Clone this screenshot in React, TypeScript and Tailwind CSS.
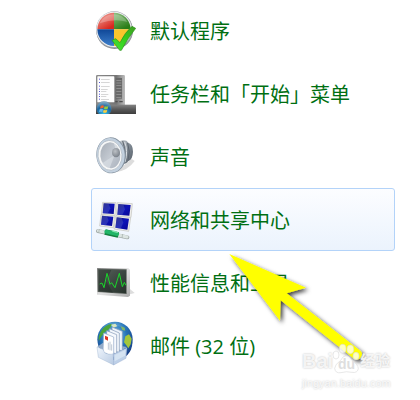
import React from 'react';

const ICON_CLASS = 'w-[40px] h-[41px] shrink-0';

function DefaultProgramsIcon() {
  return (
    <svg viewBox="33 30 120 123" className={ICON_CLASS} aria-hidden="true">
      <defs>
        <linearGradient id="dp-red" x1="0" y1="0" x2="0.6" y2="1">
          <stop offset="0" stopColor="#f3b0a6" />
          <stop offset="1" stopColor="#d8281f" />
        </linearGradient>
        <linearGradient id="dp-green" x1="0" y1="0" x2="0.5" y2="1">
          <stop offset="0" stopColor="#8fc183" />
          <stop offset="1" stopColor="#2a7d17" />
        </linearGradient>
        <linearGradient id="dp-blue" x1="0" y1="0" x2="0" y2="1">
          <stop offset="0" stopColor="#0f4797" />
          <stop offset="1" stopColor="#3d7fcb" />
        </linearGradient>
        <linearGradient id="dp-check" x1="1" y1="0" x2="0" y2="1">
          <stop offset="0" stopColor="#3f9a22" />
          <stop offset="0.5" stopColor="#35cf1c" />
          <stop offset="1" stopColor="#47e436" />
        </linearGradient>
      </defs>
      <circle cx="89" cy="92" r="55" fill="#8b8e92" />
      <circle cx="88" cy="89" r="55" fill="#a4a8ad" />
      <circle cx="87" cy="88" r="53" fill="#eef0f2" />
      <path d="M87 88V38A50 50 0 0 0 37 88Z" fill="url(#dp-red)" />
      <path d="M87 88V38A50 50 0 0 1 137 88Z" fill="url(#dp-green)" />
      <path d="M87 88H37A50 50 0 0 0 87 138Z" fill="url(#dp-blue)" />
      <path d="M87 88H137A50 50 0 0 1 87 138Z" fill="#fbc52c" />
      <path d="M44 70A47 47 0 0 1 127 66Q90 54 44 70Z" fill="#fff" opacity="0.25" />
      <path d="M81 121L92 116L105 128Q119 98 141 79L152 85Q127 116 109 151H104Z" fill="url(#dp-check)" stroke="#2a8f19" strokeWidth="2" strokeLinejoin="round" />
    </svg>
  );
}

function TaskbarIcon() {
  const lines = [52, 62, 73, 82, 89, 97, 104, 112];
  const widths = [26, 26, 26, 20, 16, 22, 16, 24];
  return (
    <svg viewBox="33 33 120 123" className={ICON_CLASS} aria-hidden="true">
      <defs>
        <linearGradient id="tb-panel" x1="0" y1="0" x2="1" y2="0">
          <stop offset="0" stopColor="#8b8b8b" />
          <stop offset="0.7" stopColor="#747474" />
          <stop offset="1" stopColor="#bdbdbd" />
        </linearGradient>
        <linearGradient id="tb-bar" x1="0" y1="0" x2="0" y2="1">
          <stop offset="0" stopColor="#858585" />
          <stop offset="0.5" stopColor="#595959" />
          <stop offset="1" stopColor="#3d3d3d" />
        </linearGradient>
        <radialGradient id="tb-orb" cx="0.5" cy="0.9" r="0.9">
          <stop offset="0" stopColor="#36c2ec" />
          <stop offset="0.6" stopColor="#1b659f" />
          <stop offset="1" stopColor="#8fb5cc" />
        </radialGradient>
      </defs>
      <rect x="33" y="39" width="87" height="92" rx="4" fill="url(#tb-panel)" />
      <rect x="37" y="43" width="51" height="78" rx="2" fill="#fdfdfd" />
      {lines.map((y, i) => (
        <g key={y}>
          <rect x="42" y={y - 2} width="3" height="3" fill="#5757d8" />
          <rect x="48" y={y - 1} width={widths[i]} height="2" fill="#c3c3c3" />
        </g>
      ))}
      <rect x="92" y="48" width="19" height="62" fill="#686868" />
      {[54, 62, 70, 79, 88, 96, 105].map((y) => (
        <rect key={y} x="94" y={y} width="15" height="2" fill="#a3a3a3" />
      ))}
      <path d="M91 119H98M103 119H113" stroke="#4e4e4e" strokeWidth="4" />
      <rect x="33" y="128" width="120" height="28" fill="url(#tb-bar)" />
      <circle cx="57" cy="140" r="22" fill="url(#tb-orb)" stroke="#547a94" />
      <path d="M47 132Q52 128 57 131L55 139Q50 137 45 140Z" fill="#ef6430" />
      <path d="M59 132Q64 135 70 132L68 140Q62 143 57 140Z" fill="#9bcc3d" />
      <path d="M44 142Q49 139 54 142L52 150Q47 148 42 150Z" fill="#66b9ed" />
      <path d="M56 143Q61 146 67 143L65 151Q59 154 54 151Z" fill="#ffd13c" />
    </svg>
  );
}

function SoundIcon() {
  return (
    <svg viewBox="33 33 120 123" className={ICON_CLASS} aria-hidden="true">
      <defs>
        <linearGradient id="sd-body" x1="0" y1="0" x2="1" y2="1">
          <stop offset="0" stopColor="#d5dade" />
          <stop offset="0.5" stopColor="#7f8993" />
          <stop offset="1" stopColor="#4e565e" />
        </linearGradient>
        <linearGradient id="sd-cone" x1="0" y1="0" x2="1" y2="1">
          <stop offset="0" stopColor="#a5acb5" />
          <stop offset="0.5" stopColor="#c3c9d1" />
          <stop offset="1" stopColor="#aab2bd" />
        </linearGradient>
        <radialGradient id="sd-cap" cx="0.4" cy="0.35" r="0.7">
          <stop offset="0" stopColor="#bcc0c5" />
          <stop offset="1" stopColor="#777e87" />
        </radialGradient>
      </defs>
      <path d="M90 142Q128 138 149 108L140 102Z" fill="#ddd" />
      <path d="M98 50L112 46Q124 44 130 53Q144 58 144 80Q143 104 130 108Q124 118 108 118L98 126Z" fill="url(#sd-body)" />
      <path d="M113 48Q125 80 113 116M128 54Q137 80 129 107" fill="none" stroke="#5d6670" strokeWidth="3" />
      <path d="M119 51Q130 79 120 111" fill="none" stroke="#dce0e4" strokeWidth="3" />
      <ellipse cx="78" cy="91" rx="44" ry="54" fill="#8794a1" transform="rotate(-5 78 91)" />
      <ellipse cx="77" cy="91" rx="42" ry="52" fill="#c3d1df" transform="rotate(-5 77 91)" />
      <ellipse cx="75" cy="91" rx="36" ry="45" fill="#f6f7f7" stroke="#a9b4be" strokeWidth="2" transform="rotate(-5 75 91)" />
      <ellipse cx="76" cy="91" rx="30" ry="39" fill="url(#sd-cone)" transform="rotate(-5 76 91)" />
      <path d="M89 90L52 115Q61 128 74 129Z" fill="#d9dee4" opacity="0.7" />
      <path d="M92 71L86 55Q102 64 105 83Z" fill="#e3e7eb" opacity="0.6" />
      <ellipse cx="93" cy="83" rx="12" ry="14" fill="url(#sd-cap)" />
    </svg>
  );
}

function NetworkIcon() {
  const screens = [
    { frame: '53,52 93,53 90,91 49,89', fill: '56,55 89,56 86,87 53,85', shine: '56,55 71,56 76,70 68,86 53,85' },
    { frame: '97,53 142,56 138,97 93,93', fill: '100,57 137,60 133,92 97,89', shine: '100,57 115,58 120,73 112,90 97,89' },
    { frame: '48,89 89,92 85,128 44,123', fill: '51,92 85,95 81,123 48,119', shine: '51,92 66,93 71,107 63,121 48,119' },
    { frame: '92,93 137,98 131,139 87,132', fill: '95,97 132,101 127,134 91,128', shine: '95,97 110,99 115,113 107,131 91,128' },
  ];
  return (
    <svg viewBox="33 42 120 123" className={ICON_CLASS} aria-hidden="true">
      <defs>
        <linearGradient id="nw-screen" x1="0" y1="0" x2="1" y2="1">
          <stop offset="0" stopColor="#141476" />
          <stop offset="0.5" stopColor="#0d13b8" />
          <stop offset="1" stopColor="#0a0791" />
        </linearGradient>
      </defs>
      {screens.map((screen) => (
        <g key={screen.frame}>
          <polygon points={screen.frame} fill="#f0efeb" stroke="#c3c2bc" strokeWidth="2" />
          <polygon points={screen.fill} fill="url(#nw-screen)" />
          <polygon points={screen.shine} fill="#626cbd" opacity="0.35" />
        </g>
      ))}
      <path d="M39 138L127 157" stroke="#a3aba9" strokeWidth="12" strokeLinecap="round" />
      <path d="M40 137L126 156" stroke="#dce5e2" strokeWidth="9" strokeLinecap="round" />
      <path d="M60 141L100 150" stroke="#12833f" strokeWidth="17" />
      <path d="M64 140L96 147" stroke="#21b567" strokeWidth="12" strokeLinecap="round" />
      <path d="M83 138L97 142" stroke="#83e5ad" strokeWidth="4" strokeLinecap="round" />
      <path d="M43 132L41 144M113 147L111 159" stroke="#a3aeaa" strokeWidth="2" />
    </svg>
  );
}

function PerformanceIcon() {
  return (
    <svg viewBox="33 21 120 123" className={ICON_CLASS} aria-hidden="true">
      <defs>
        <linearGradient id="pf-frame" x1="0" y1="0" x2="1" y2="1">
          <stop offset="0" stopColor="#8e8e8e" />
          <stop offset="0.5" stopColor="#e2e2e2" />
          <stop offset="1" stopColor="#aaa" />
        </linearGradient>
        <linearGradient id="pf-screen" x1="0" y1="0" x2="1" y2="1">
          <stop offset="0" stopColor="#59635c" />
          <stop offset="0.5" stopColor="#3d4842" />
          <stop offset="1" stopColor="#28322c" />
        </linearGradient>
      </defs>
      <path d="M112 124L149 114L134 101Z" fill="#ddd" />
      <polygon points="36,39 130,40 135,44 135,122 129,126 36,119" fill="url(#pf-frame)" />
      <polygon points="38,41 125,43 125,117 38,111" fill="#59605b" />
      <polygon points="41,44 123,46 123,115 41,109" fill="url(#pf-screen)" />
      <polygon points="41,44 79,45 63,78 84,113 41,109" fill="#222b25" opacity="0.45" />
      <path d="M44 87L51 84L57 98L66 55L75 88L80 83L90 98L103 55L112 95L118 82L123 91" fill="none" stroke="#1ad72b" strokeWidth="3" strokeLinejoin="round" />
    </svg>
  );
}

function MailIcon() {
  return (
    <svg viewBox="33 30 120 123" overflow="visible" className={ICON_CLASS} aria-hidden="true">
      <defs>
        <radialGradient id="ml-globe" cx="0.45" cy="0.3" r="0.75">
          <stop offset="0" stopColor="#9bdcf2" />
          <stop offset="0.5" stopColor="#2774b9" />
          <stop offset="1" stopColor="#102c74" />
        </radialGradient>
        <linearGradient id="ml-tray" x1="0" y1="0" x2="1" y2="1">
          <stop offset="0" stopColor="#f0f6fd" />
          <stop offset="1" stopColor="#b8cae2" />
        </linearGradient>
      </defs>
      <circle cx="90" cy="73" r="53" fill="url(#ml-globe)" />
      <circle cx="91" cy="84" r="51" fill="url(#ml-globe)" />
      <path d="M49 47Q60 29 82 26L74 41L59 52L48 66L41 78Q39 62 49 47Z" fill="#4aa43b" />
      <path d="M78 29L91 26L97 34L85 38Z" fill="#d7e6c0" />
      <path d="M107 34L119 38L121 47L112 45Z" fill="#83b766" />
      <path d="M121 64L132 58L140 71L137 88L130 100L124 91L117 82Z" fill="#a4c63a" />
      <path d="M37 95L53 84L126 96L86 122Z" fill="#93abc9" />
      <path d="M81 36L112 49V108L81 98Z" fill="#eef4fb" stroke="#7c96b7" strokeWidth="2" />
      <path d="M73 41L103 54V113L73 101Z" fill="#f3f7fc" stroke="#8196b4" strokeWidth="2" />
      <path d="M65 47L95 59V117L65 107Z" fill="#f6f9fd" stroke="#8196b4" strokeWidth="2" />
      <path d="M56 54L86 66V125L54 112Z" fill="#fff" stroke="#92a9c8" strokeWidth="2" />
      <path d="M60 62L69 66V77L60 73Z" fill="#e03524" />
      <path d="M70 83V104M75 80V106M80 88V107" stroke="#9eacc0" strokeWidth="2" />
      <path d="M36 96L54 103Q56 115 69 117Q79 119 85 116L86 150L40 127Z" fill="url(#ml-tray)" stroke="#8aa3c5" strokeWidth="1" />
      <path d="M85 118L126 98L123 130L86 150Z" fill="#bed0e8" stroke="#859fc4" strokeWidth="1" />
      <path d="M89 120L122 104L120 122L89 139Z" fill="#deebf7" opacity="0.7" />
    </svg>
  );
}

const ITEMS = [
  { title: '默认程序', icon: DefaultProgramsIcon },
  { title: '任务栏和「开始」菜单', icon: TaskbarIcon },
  { title: '声音', icon: SoundIcon },
  { title: '网络和共享中心', icon: NetworkIcon, active: true },
  { title: '性能信息和工具', icon: PerformanceIcon },
  { title: '邮件 (32 位)', icon: MailIcon },
];

function PointerArrow() {
  return (
    <svg viewBox="0 0 480 420" className="absolute left-[220px] top-[245px] w-[160px] h-[140px] overflow-visible pointer-events-none" aria-hidden="true">
      <defs>
        <filter id="arrow-shadow" x="-10%" y="-10%" width="125%" height="125%">
          <feDropShadow dx="7" dy="7" stdDeviation="6" floodColor="#000" floodOpacity="0.75" />
        </filter>
      </defs>
      <path
        d="M28 27L258 128L200 145L421 317Q430 325 424 336Q415 348 402 341L182 166L180 227Z"
        fill="#ff0"
        filter="url(#arrow-shadow)"
      />
    </svg>
  );
}

function Watermark() {
  return (
    <div className="absolute left-[302px] top-[346px] text-white/80 pointer-events-none font-['Liberation_Sans','Noto_Sans_CJK_SC',sans-serif] font-bold [text-shadow:0_0_2px_#bbb]">
      <div className="flex items-center h-[30px]">
        <span className="text-[20px] leading-[30px]">Bai</span>
        <span className="relative w-[27px] h-[30px]">
          <svg viewBox="0 0 81 90" className="absolute inset-0 w-full h-full overflow-visible" aria-hidden="true">
            <g fill="#fff" fillOpacity="0.75" stroke="#d9d9d9" strokeOpacity="0.6" strokeWidth="3">
              <ellipse cx="9" cy="27" rx="9" ry="12" />
              <ellipse cx="29" cy="8" rx="10" ry="13" />
              <ellipse cx="52" cy="10" rx="10" ry="13" />
              <ellipse cx="69" cy="30" rx="9" ry="11" />
              <path d="M39 29Q49 28 55 41Q76 56 76 68Q73 82 57 79Q39 75 24 80Q7 83 5 67Q5 56 23 43Q29 30 39 29Z" />
            </g>
          </svg>
          <span className="absolute inset-x-0 top-[10px] text-center text-[14px] leading-[16px] text-[#dedede] [text-shadow:none]">du</span>
        </span>
        <span className="text-[15px] leading-[30px]">经验</span>
      </div>
      <div className="text-[11px] leading-[14px] font-normal">jingyan.baidu.com</div>
    </div>
  );
}

export default function App() {
  return (
    <main className="relative flex flex-col min-h-screen bg-white overflow-hidden font-['Open_Sans','Noto_Sans_CJK_SC',sans-serif]">
      <nav className="-mt-px pl-[91px] pr-[25px]">
        {ITEMS.map((item) => {
          const IconComponent = item.icon;
          return (
            <a
              key={item.title}
              href="#"
              className={`flex items-center gap-[14px] h-[63px] pl-1 border rounded-[3px] text-[20px] leading-[28px] text-[#006f12] whitespace-nowrap ${
                item.active ? 'border-[#b3d3f9] bg-linear-to-b from-[#fcfdff] to-[#ebf3fd]' : 'border-transparent'
              }`}
            >
              <IconComponent />
              <span className="pt-0.5">{item.title}</span>
            </a>
          );
        })}
      </nav>
      <PointerArrow />
      <Watermark />
    </main>
  );
}
